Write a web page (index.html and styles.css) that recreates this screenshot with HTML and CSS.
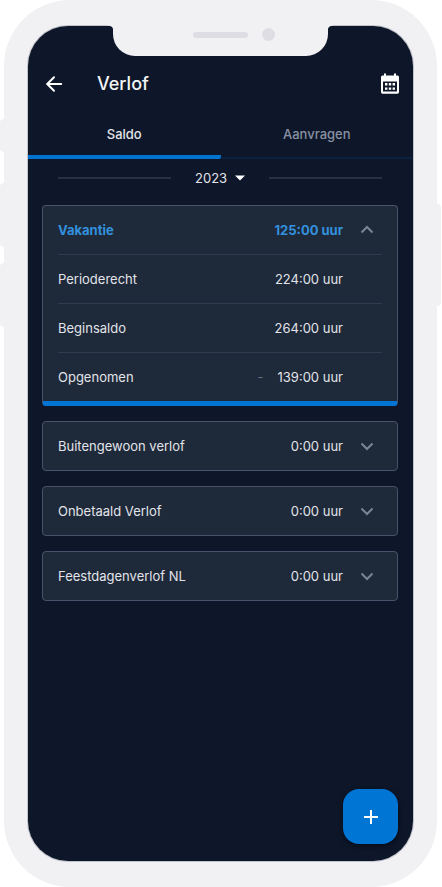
FILE: index.html
```html
<!DOCTYPE html>
<html lang="nl">
<head>
<meta charset="utf-8">
<meta name="viewport" content="width=device-width, initial-scale=1">
<title>Verlof</title>
<link rel="stylesheet" href="styles.css">
</head>
<body>
<div class="phone">
  <span class="side side-mute"></span>
  <span class="side side-up"></span>
  <span class="side side-down"></span>
  <span class="side side-power"></span>
  <div class="screen">
    <div class="notch"><span class="speaker"></span><span class="camera"></span></div>
    <header class="bar">
      <button class="icon-button" type="button" aria-label="Terug">
        <svg width="24" height="24" viewBox="0 0 24 24" fill="none" stroke="#fff" stroke-width="2" stroke-linecap="round"><path d="M19.200 12H5.200M12 5.200L5.200 12l6.800 6.800"/></svg>
      </button>
      <h1 class="title">Verlof</h1>
      <button class="icon-button" type="button" aria-label="Kalender">
        <svg width="24" height="24" viewBox="0 0 24 24"><path fill="#fff" fill-rule="evenodd" d="M6 1.500h2v2h8v-2h2v2h1.500q1.500 0 1.500 1.500v15q0 1.800-1.500 1.800h-15Q3 21.800 3 20V5q0-1.500 1.500-1.500H6zM5 9.500V19.500h14V9.500z"/><path fill="#fff" d="M7 11h2.400v2.400H7zM10.800 11h2.400v2.400h-2.400zM14.600 11H17v2.400h-2.400zM7 15.400h2.400v2.400H7zM10.800 15.400h2.400v2.400h-2.400zM14.600 15.400H17v2.400h-2.400z"/></svg>
      </button>
    </header>
    <nav class="tabs">
      <button class="tab tab-active" type="button">Saldo</button>
      <button class="tab" type="button">Aanvragen</button>
    </nav>
    <main class="content">
      <div class="year">
        <span class="rule"></span>
        <div class="year-picker">
          <select class="year-select" aria-label="Jaar"><option>2023</option></select>
          <svg class="year-arrow" width="10" height="6" viewBox="0 0 10 6"><path fill="#fff" d="M0 .5h10L5 5.500z"/></svg>
        </div>
        <span class="rule"></span>
      </div>
      <section class="card card-open">
        <button class="row row-head" type="button" aria-expanded="true">
          <span>Vakantie</span><span>125:00 uur</span>
          <svg class="chevron" width="24" height="24" viewBox="0 0 24 24"><path d="M6.500 14.500L12 9l5.500 5.500"/></svg>
        </button>
        <dl class="details">
          <div class="row"><dt>Perioderecht</dt><dd>224:00 uur</dd></div>
          <div class="row"><dt>Beginsaldo</dt><dd>264:00 uur</dd></div>
          <div class="row"><dt>Opgenomen</dt><dd><span class="minus">-</span>139:00 uur</dd></div>
        </dl>
      </section>
      <section class="card">
        <button class="row" type="button" aria-expanded="false">
          <span>Buitengewoon verlof</span><span>0:00 uur</span>
          <svg class="chevron" width="24" height="24" viewBox="0 0 24 24"><path d="M6.500 9.500L12 15l5.500-5.500"/></svg>
        </button>
      </section>
      <section class="card">
        <button class="row" type="button" aria-expanded="false">
          <span>Onbetaald Verlof</span><span>0:00 uur</span>
          <svg class="chevron" width="24" height="24" viewBox="0 0 24 24"><path d="M6.500 9.500L12 15l5.500-5.500"/></svg>
        </button>
      </section>
      <section class="card">
        <button class="row" type="button" aria-expanded="false">
          <span>Feestdagenverlof NL</span><span>0:00 uur</span>
          <svg class="chevron" width="24" height="24" viewBox="0 0 24 24"><path d="M6.500 9.500L12 15l5.500-5.500"/></svg>
        </button>
      </section>
    </main>
    <button class="add" type="button" aria-label="Toevoegen">
      <svg width="24" height="24" viewBox="0 0 24 24" fill="none" stroke="#fff" stroke-width="2"><path d="M12 5v14M5 12h14"/></svg>
    </button>
  </div>
</div>
</body>
</html>
```
FILE: styles.css
```css
* {
  box-sizing: border-box;
}

body {
  margin: 0;
  background: #fff;
  color: #e2e4e9;
  font: 13px/20px Inter, "Liberation Sans", sans-serif;
}

button,
select {
  appearance: none;
  margin: 0;
  padding: 0;
  border: 0;
  background: none;
  color: inherit;
  font: inherit;
  cursor: pointer;
}

svg {
  display: block;
}

/* Device frame */
.phone {
  position: relative;
  display: flex;
  min-height: 100vh;
  margin: 0 5px 0 4px;
  padding: 26px 24px;
  border-radius: 66px;
  background: #f1f1f4;
}

.side {
  position: absolute;
  left: -4px;
  width: 4px;
  height: 64px;
  border-radius: 4px 0 0 4px;
  background: #f1f1f4;
}

.side-mute {
  top: 119px;
  height: 33px;
}

.side-up {
  top: 183px;
}

.side-down {
  top: 263px;
}

.side-power {
  top: 204px;
  right: -4px;
  left: auto;
  height: 102px;
  border-radius: 0 4px 4px 0;
}

.screen {
  display: flex;
  flex: 1;
  flex-direction: column;
  min-width: 0;
  border-radius: 40px;
  background: #0e1729;
  box-shadow: 0 0 0 1px #c2c4cc;
}

.notch {
  position: relative;
  display: flex;
  align-items: center;
  align-self: center;
  justify-content: center;
  gap: 14px;
  width: 56%;
  height: 31px;
  margin-top: -1px;
  padding: 0 0 12px 27px;
  border-radius: 0 0 22px 22px;
  background: #f1f1f4;
}

.notch::before,
.notch::after {
  content: "";
  position: absolute;
  top: 0;
  left: -5px;
  width: 5px;
  height: 6px;
  background: radial-gradient(circle at 0 100%, transparent 5px, #f1f1f4 6px);
}

.notch::after {
  right: -5px;
  left: auto;
  background: radial-gradient(circle at 100% 100%, transparent 5px, #f1f1f4 6px);
}

.speaker {
  width: 55px;
  height: 6px;
  border-radius: 3px;
  background: #dedde4;
}

.camera {
  width: 13px;
  height: 13px;
  border-radius: 50%;
  background: #dedde4;
}

/* App header */
.bar {
  display: flex;
  align-items: center;
  height: 56px;
  padding: 0 11px 0 14px;
}

.title {
  flex: 1;
  margin: 0 0 0 31px;
  color: #f3f4f6;
  font-size: 18px;
  font-weight: 500;
  line-height: 24px;
}

.tabs {
  display: flex;
  height: 47px;
}

.tab {
  flex: 1;
  padding-bottom: 2px;
  border-bottom: 2px solid #08213f;
  color: #8791a3;
  font-weight: 500;
}

.tab-active {
  padding-bottom: 0;
  border-bottom: 4px solid #0073d1;
  border-radius: 0 2px 2px 0;
  color: #e2e4e9;
}

/* Leave balances */
.content {
  display: flex;
  flex-direction: column;
  gap: 15px;
  padding: 7px 15px 16px 14px;
}

.year {
  display: flex;
  align-items: center;
  gap: 24px;
  height: 24px;
  padding: 0 16px;
}

.rule {
  flex: 1;
  height: 2px;
  background: #283142;
}

.year-picker {
  display: flex;
  align-items: center;
}

.year-select {
  width: 50px;
  margin-right: -10px;
  padding-right: 16px;
}

.year-arrow {
  pointer-events: none;
}

.card {
  border: 1px solid #46536a;
  border-radius: 4px;
  background: #1e293a;
}

.card-open {
  border-bottom: 5px solid #0075d6;
}

.row {
  display: grid;
  grid-template-columns: 1fr auto 24px;
  align-items: center;
  gap: 12px;
  width: 100%;
  height: 48px;
  padding: 0 18px 0 15px;
  text-align: left;
}

.row-head {
  color: #3391de;
  font-weight: 700;
}

.details,
.details dd {
  margin: 0;
}

.details .row {
  width: auto;
  height: 49px;
  margin: 0 15px;
  padding: 0 3px 0 0;
  border-top: 1px solid #303b4e;
}

.minus {
  margin-right: 14px;
  color: #657084;
}

.chevron {
  fill: none;
  stroke: #7b8494;
  stroke-width: 2;
}

.add {
  display: grid;
  place-items: center;
  align-self: flex-end;
  width: 55px;
  height: 55px;
  margin: auto 15px 17px 0;
  border-radius: 16px;
  background: #0075d3;
  box-shadow: 0 2px 5px #060b18;
}
```
